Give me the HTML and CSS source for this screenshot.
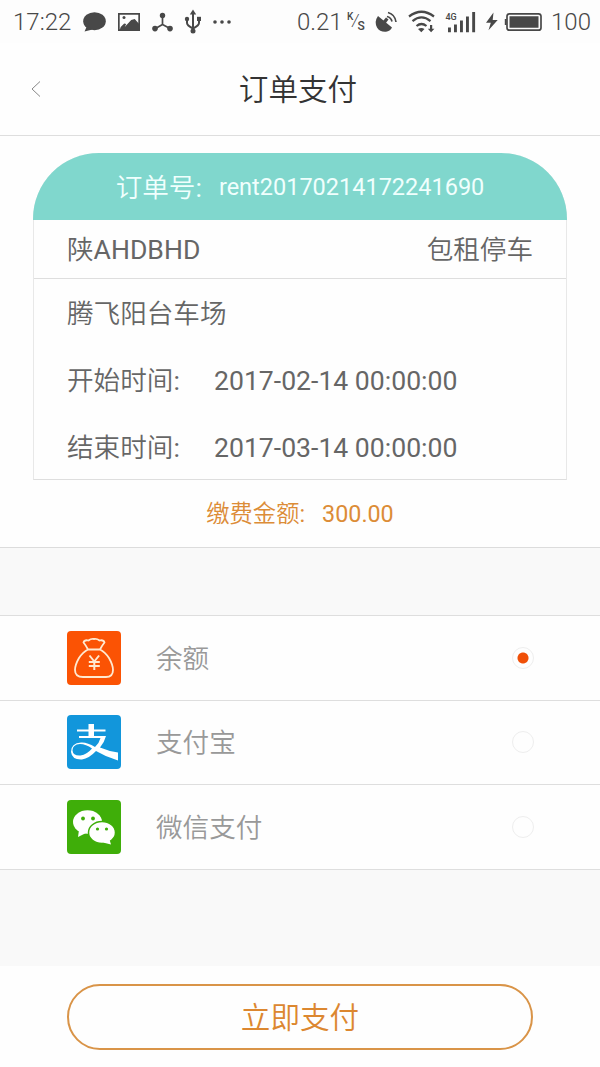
FILE: index.html
```html
<!DOCTYPE html>
<html lang="zh-CN">
<head>
<meta charset="utf-8">
<title>订单支付</title>
<link rel="stylesheet" href="styles.css">
</head>
<body>
<div class="status">
  <span class="clock">17:22</span>
  <svg class="left-icons" width="152" height="28" viewBox="82 7 152 28" fill="#484848">
    <ellipse cx="94.5" cy="20.2" rx="11.3" ry="9"/><path d="M87 25l-2.500 5.500 8-2z"/>
    <path fill-rule="evenodd" d="M118 12h22v18h-22zM119.700 13.700v14.600h18.600v-14.600z"/><circle cx="124" cy="16.600" r="1.500"/>
    <path d="M119.700 29l1-3 3.500-3.500 2 .5-1.500 3 6.500-7 3.500-1 4.500 5v6z"/>
    <g stroke="#484848" stroke-width="1.700" fill="none"><path d="M162.500 15v8.500l-7 4M162.500 23.500l7.500 4"/><path d="M193 12v18M187 18v4q0 2.500 6 5.500M199 18v4q0 2.500-6 5.500" stroke-width="2"/></g>
    <circle cx="162.500" cy="14.500" r="2.700"/><circle cx="155" cy="27.600" r="2.800"/><circle cx="170" cy="27.600" r="2.800"/>
    <path d="M193 8.500l3.200 5h-6.400z"/><circle cx="187" cy="18" r="2.200"/><path d="M197 15.800h4v4.200h-4z"/><circle cx="193" cy="30" r="2.500"/>
    <circle cx="215" cy="21" r="1.800"/><circle cx="222" cy="21" r="1.800"/><circle cx="229" cy="21" r="1.800"/>
  </svg>
  <span class="rate">0.21</span>
  <span class="unit"><sup>K</sup><i>/</i><sub>S</sub></span>
  <svg class="right-icons" width="170" height="28" viewBox="374 7 170 28" fill="#484848">
    <path d="M378 15l14 11.500q-2 3.700-6 4.300-6 .5-9-4.300-3-6 1-11.500z"/><path d="M383 20l3-3.500 2.500 2-3 4z"/>
    <g fill="none" stroke="#484848" stroke-width="1.700"><path d="M387 15.500q4 1 5 5M388 11.500q7 2 8 9.500"/></g>
    <g fill="none" stroke="#484848" stroke-width="2.200"><path d="M409 15.500q12.500-9.500 25 0M412.500 20.200q9-7.500 18 0M416.500 25q5-4 10 0"/></g>
    <path d="M418 28q3.500-2 6.500 0l-3.200 3.300zM430 24h2.200v3.700h2.200l-3.300 3.600-3.300-3.600h2.200z"/>
    <text x="445.500" y="18.500" class="tiny">4G</text>
    <path d="M448 26.500h2.900v4.800h-2.900zM454 23.500h2.900v7.800h-2.900zM460 19.500h2.900v11.800h-2.900zM466 15.500h2.900v15.800h-2.900zM472.200 11h2.900v20.300h-2.900z"/>
    <path d="M493.500 11.500l-7.500 10.300h4.800l-2.300 7.500 9.200-10.300h-5z"/>
    <rect x="507" y="12.800" width="34" height="16.400" rx="2.500" fill="none" stroke="#484848" stroke-width="1.700"/><path d="M509.500 15.300h29v11.400h-29zM504.800 18h1.800v6h-1.800z"/>
  </svg>
  <span class="level">100</span>
</div>
<header class="header">
  <svg class="back" width="10" height="18" viewBox="0 0 10 18" fill="none" stroke="#888" stroke-width="1"><path d="M9 1.500L1 9l8 7.500"/></svg>
  <h1 class="title">订单支付</h1>
</header>
<section class="order">
  <div class="card">
    <div class="card-head"><span class="no-label">订单号<b>:</b></span><b class="no">rent20170214172241690</b></div>
    <div class="card-plate"><span>陕<b>AHDBHD</b></span><span>包租停车</span></div>
    <div class="card-line">腾飞阳台车场</div>
    <div class="card-line"><span class="key">开始时间<b>:</b></span><b>2017-02-14 00:00:00</b></div>
    <div class="card-line"><span class="key">结束时间<b>:</b></span><b>2017-03-14 00:00:00</b></div>
  </div>
  <div class="amount"><span>缴费金额<b>:</b></span><b class="sum">300.00</b></div>
</section>
<section class="methods">
  <div class="method">
    <svg class="logo" viewBox="0 0 54 54"><rect width="54" height="54" rx="4" fill="#fb5304"/>
      <g fill="none" stroke="#ffe9d0" stroke-width="1.800" stroke-linejoin="round" stroke-linecap="round"><path d="M21 18.500q-2-4-4.500-7 1-3 5-2 2.500-2 5.500-1.500 3-.5 5.500 1.500 4-1 5 2-2.500 3-4.500 7Q38 21 42 27q4 7 4 12 0 7-7 7H16q-8 0-8-7 0-5 4-12 4-6 9-8.500zM21 18.500h12"/><path d="M22.500 24.500l4.800 6 4.800-6M21.800 31h11M21.800 35h11M27.300 31v8" stroke-width="2" stroke-linecap="butt"/></g></svg>
    <span class="name">余额</span><span class="radio on"></span>
  </div>
  <div class="method">
    <svg class="logo" viewBox="0 0 54 54"><rect width="54" height="54" rx="4" fill="#1296db"/>
      <path fill="#fff" d="M21.500 9H27v5.500h11.500v2H27v4.500h12q-1.500 6-6 11.500 8 3.500 18 5v8q-12-3.500-22-9.500-7 7.500-14 8.500-10 .5-11-7.500 0-9 10-9.500 6-.5 14 4.500 4.500-4.500 5.500-9H12v-2h9.500v-4.500H10v-2h11.500zM25 33.500q-6-4.500-12-4.500-7.500.5-7.500 6.500.5 5.500 8 5Q20 39.500 25 33.500z"/></svg>
    <span class="name">支付宝</span><span class="radio"></span>
  </div>
  <div class="method">
    <svg class="logo" viewBox="0 0 54 54"><rect width="54" height="54" rx="4" fill="#3fae09"/>
      <g fill="#fff"><ellipse cx="20.500" cy="22" rx="14.500" ry="11.700"/><path d="M12 30l-1 7 8-4z"/><ellipse cx="35" cy="32.500" rx="13.500" ry="11" stroke="#3fae09" stroke-width="1.500"/><path d="M36 42.500l8 2-1.500-5z"/></g>
      <g fill="#3fae09"><circle cx="16" cy="18.500" r="1.900"/><circle cx="26" cy="18.500" r="1.900"/><circle cx="30.500" cy="29" r="1.600"/><circle cx="39.500" cy="29" r="1.600"/></g></svg>
    <span class="name">微信支付</span><span class="radio"></span>
  </div>
</section>
<footer class="footer"><button class="pay">立即支付</button></footer>
</body>
</html>
```
FILE: styles.css
```css
* { box-sizing: border-box; }
body {
  margin: 0;
  height: 1067px;
  display: flex;
  flex-direction: column;
  background: #f9f9f9;
  color: #666;
  font: 350 26.6px/1 Roboto, "Noto Sans CJK SC", sans-serif;
  overflow: hidden;
}
b { font-weight: 400; }
.status {
  height: 43px;
  flex: none;
  display: flex;
  align-items: center;
  background: #fdfdfd;
  color: #484848;
  font-size: 24px;
  white-space: nowrap;
}
.clock { width: 69px; margin-left: 13px; }
.left-icons { flex: none; }
.rate { margin-left: 63px; width: 50px; }
.unit { width: 27px; height: 22px; display: flex; font-size: 11px; font-weight: 500; }
.unit sup { line-height: 11px; font-size: 10px; vertical-align: baseline; }
.unit i { font-size: 16px; font-weight: 300; line-height: 20px; margin: 0 -1px; }
.unit sub { line-height: 14px; font-size: 12px; align-self: flex-end; vertical-align: baseline; }
.right-icons { flex: none; }
.tiny { font-size: 9px; font-weight: 500; }
.level { margin-left: 7px; }
.header {
  height: 93px;
  flex: none;
  display: grid;
  grid-template-columns: 72px 1fr 76px;
  align-items: center;
  background: #fefefe;
  border-bottom: 1px solid #dedede;
}
.back { margin-left: 31px; }
.title { margin: 0; padding-top: 4px; text-align: center; color: #333; font-size: 29.600px; font-weight: 350; }
.order { height: 412px; flex: none; padding: 17px 33px 0; background: #fefefe; border-bottom: 1px solid #dcdcdc; }
.card { height: 327px; border: 1px solid #e8e8e8; border-bottom-color: #dedede; border-top: 0; border-radius: 66px 66px 0 0; }
.card-head {
  height: 67px;
  margin: 0 -1px;
  padding-top: 3px;
  display: flex;
  align-items: center;
  justify-content: center;
  border-radius: 66px 66px 0 0;
  background: #80d7cd;
  color: #f0fffd;
}
.no-label { margin-right: 17px; }
.no { font-size: 23.500px; }
.card-plate { height: 59px; padding: 3px 33px 0; display: flex; align-items: center; justify-content: space-between; border-bottom: 1px solid #dedede; }
.card-line { height: 67px; padding: 3px 33px 0; display: flex; align-items: center; }
.key { width: 147px; }
.amount { height: 67px; padding-top: 3px; display: flex; align-items: center; justify-content: center; color: #dc8c37; font-size: 23.300px; }
.sum { margin-left: 17px; }
.methods { margin-top: 67px; flex: none; border-top: 1px solid #dedede; background: #fefefe; }
.method { height: 84.500px; padding: 0 66px 0 67px; display: flex; align-items: center; border-bottom: 1px solid #dedede; color: #999; }
.logo { width: 54px; height: 54px; flex: none; }
.name { margin-left: 35px; padding-top: 3px; }
.radio { width: 22px; height: 22px; margin-left: auto; border: 1px solid #eee; border-radius: 50%; }
.on { background: radial-gradient(circle, #f05008 5px, transparent 6px); }
.footer { height: 101px; margin-top: auto; flex: none; padding: 18px 67px 0; background: #fefefe; }
.pay { width: 100%; height: 66px; padding: 4px 0 0; border: 2px solid #d99448; border-radius: 33px; background: none; color: #dc8730; font: inherit; font-size: 29.600px; }
```
